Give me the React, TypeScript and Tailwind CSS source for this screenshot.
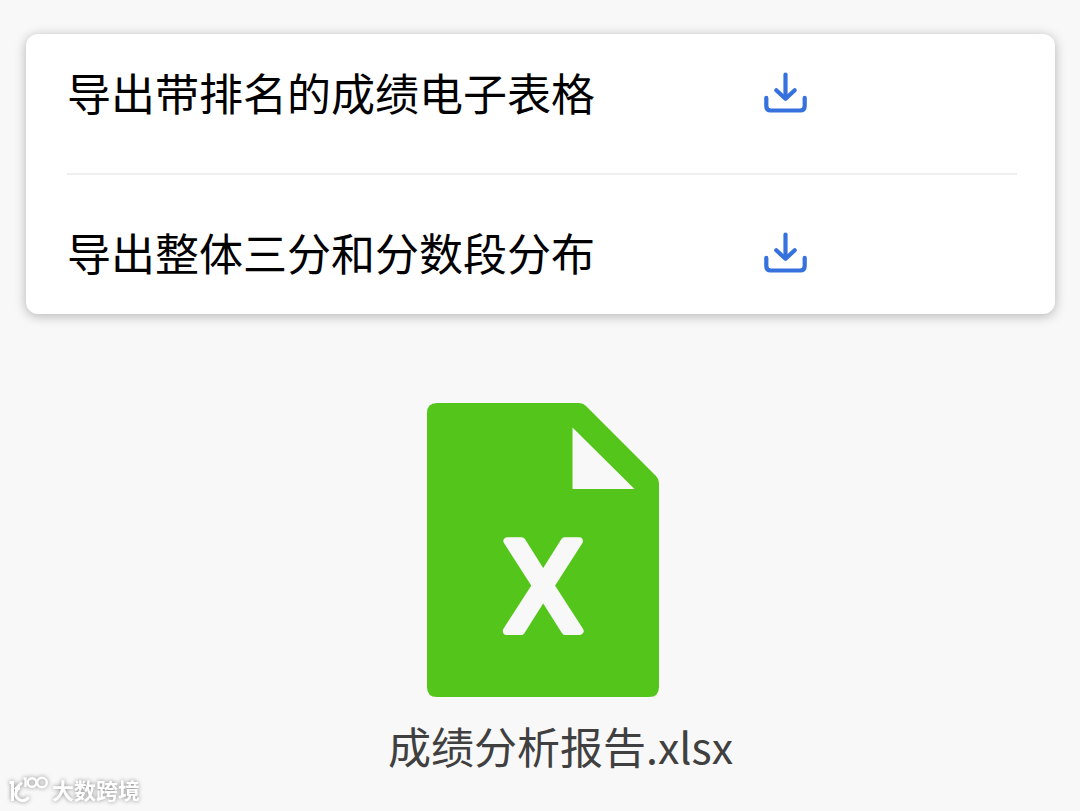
interface ExportItem {
	id: string;
	label: string;
}

const exportItems: ExportItem[] = [
	{ id: "ranking", label: "导出带排名的成绩电子表格" },
	{ id: "distribution", label: "导出整体三分和分数段分布" },
];

function DownloadIcon() {
	return (
		<svg
			viewBox="0 0 44 44"
			className="w-11 h-11"
			fill="none"
			stroke="#3671de"
			strokeWidth="4.2"
			strokeLinecap="round"
			strokeLinejoin="round"
			aria-hidden="true"
		>
			<path d="M21.500 4.500V28" />
			<path d="M12.300 20.300l9.200 8.500 9.200-8.500" />
			<path d="M2.300 27.800V36q0 4.500 4.500 4.500h29.400q4.500 0 4.500-4.500V27.800" />
		</svg>
	);
}

function SpreadsheetIcon() {
	return (
		<svg viewBox="0 0 232 294" className="w-[232px] h-[294px]" role="img" aria-label="Excel">
			<path
				fill="#53c51b"
				d="M10 0H152q4 0 7 3L229 73q3 3 3 7V284q0 10-10 10H10q-10 0-10-10V10Q0 0 10 0Z"
			/>
			<path fill="#f8f8f8" d="M145.500 24.500V86h62Z" />
			<text
				x="116"
				y="228"
				textAnchor="middle"
				fontSize="127"
				fill="#f8f8f8"
				stroke="#f8f8f8"
				strokeWidth="8"
				strokeLinejoin="round"
				className="font-[Roboto,sans-serif] font-normal"
			>
				X
			</text>
		</svg>
	);
}

function Watermark() {
	return (
		<div className="absolute left-2 bottom-[3px] flex items-center gap-1 text-white drop-shadow-[0_0_2px_#888888]">
			<svg
				viewBox="0 0 40 30"
				className="w-10 h-[30px]"
				fill="none"
				stroke="currentColor"
				strokeWidth="3"
				aria-hidden="true"
			>
				<path d="M1.500 6.500h3V25" />
				<path d="M14 6.500L7 13.500" />
				<path d="M12 11.500a6.800 6.800 0 1 0 8.500 9.500" />
				<path strokeWidth="2.4" d="M15.500 2.500h2V11" />
				<circle strokeWidth="2.4" cx="24" cy="6.500" r="4.300" />
				<circle strokeWidth="2.4" cx="34" cy="6.500" r="4.800" />
			</svg>
			<span className="pb-1 text-[22px] leading-[30px] font-bold">大数跨境</span>
		</div>
	);
}

export default function App() {
	return (
		<div className="relative min-h-screen bg-[#f8f8f8] pl-[26px] pr-[25px] pt-[34px] pb-8 font-['Noto_Sans_CJK_SC',sans-serif]">
			<ul className="bg-white rounded-xl pl-[41px] pr-[38px] shadow-[0_2px_12px_rgba(0,0,0,0.28)] divide-y-2 divide-[#efefef]">
				{exportItems.map((item) => (
					<li
						key={item.id}
						className="flex items-center justify-between pt-[30px] pb-[53px] last:pt-[49px] last:pb-[34px]"
					>
						<span id={item.id} className="text-[44px] leading-[56px] text-black">
							{item.label}
						</span>
						<button
							type="button"
							aria-label="下载"
							aria-describedby={item.id}
							className="mr-[209px] shrink-0 cursor-pointer"
						>
							<DownloadIcon />
						</button>
					</li>
				))}
			</ul>

			<figure className="mt-[89px] pl-1 flex flex-col items-center">
				<SpreadsheetIcon />
				<figcaption className="mt-5 pl-9 text-[43px] leading-[56px] text-[#404040]">
					成绩分析报告.xlsx
				</figcaption>
			</figure>

			<Watermark />
		</div>
	);
}
